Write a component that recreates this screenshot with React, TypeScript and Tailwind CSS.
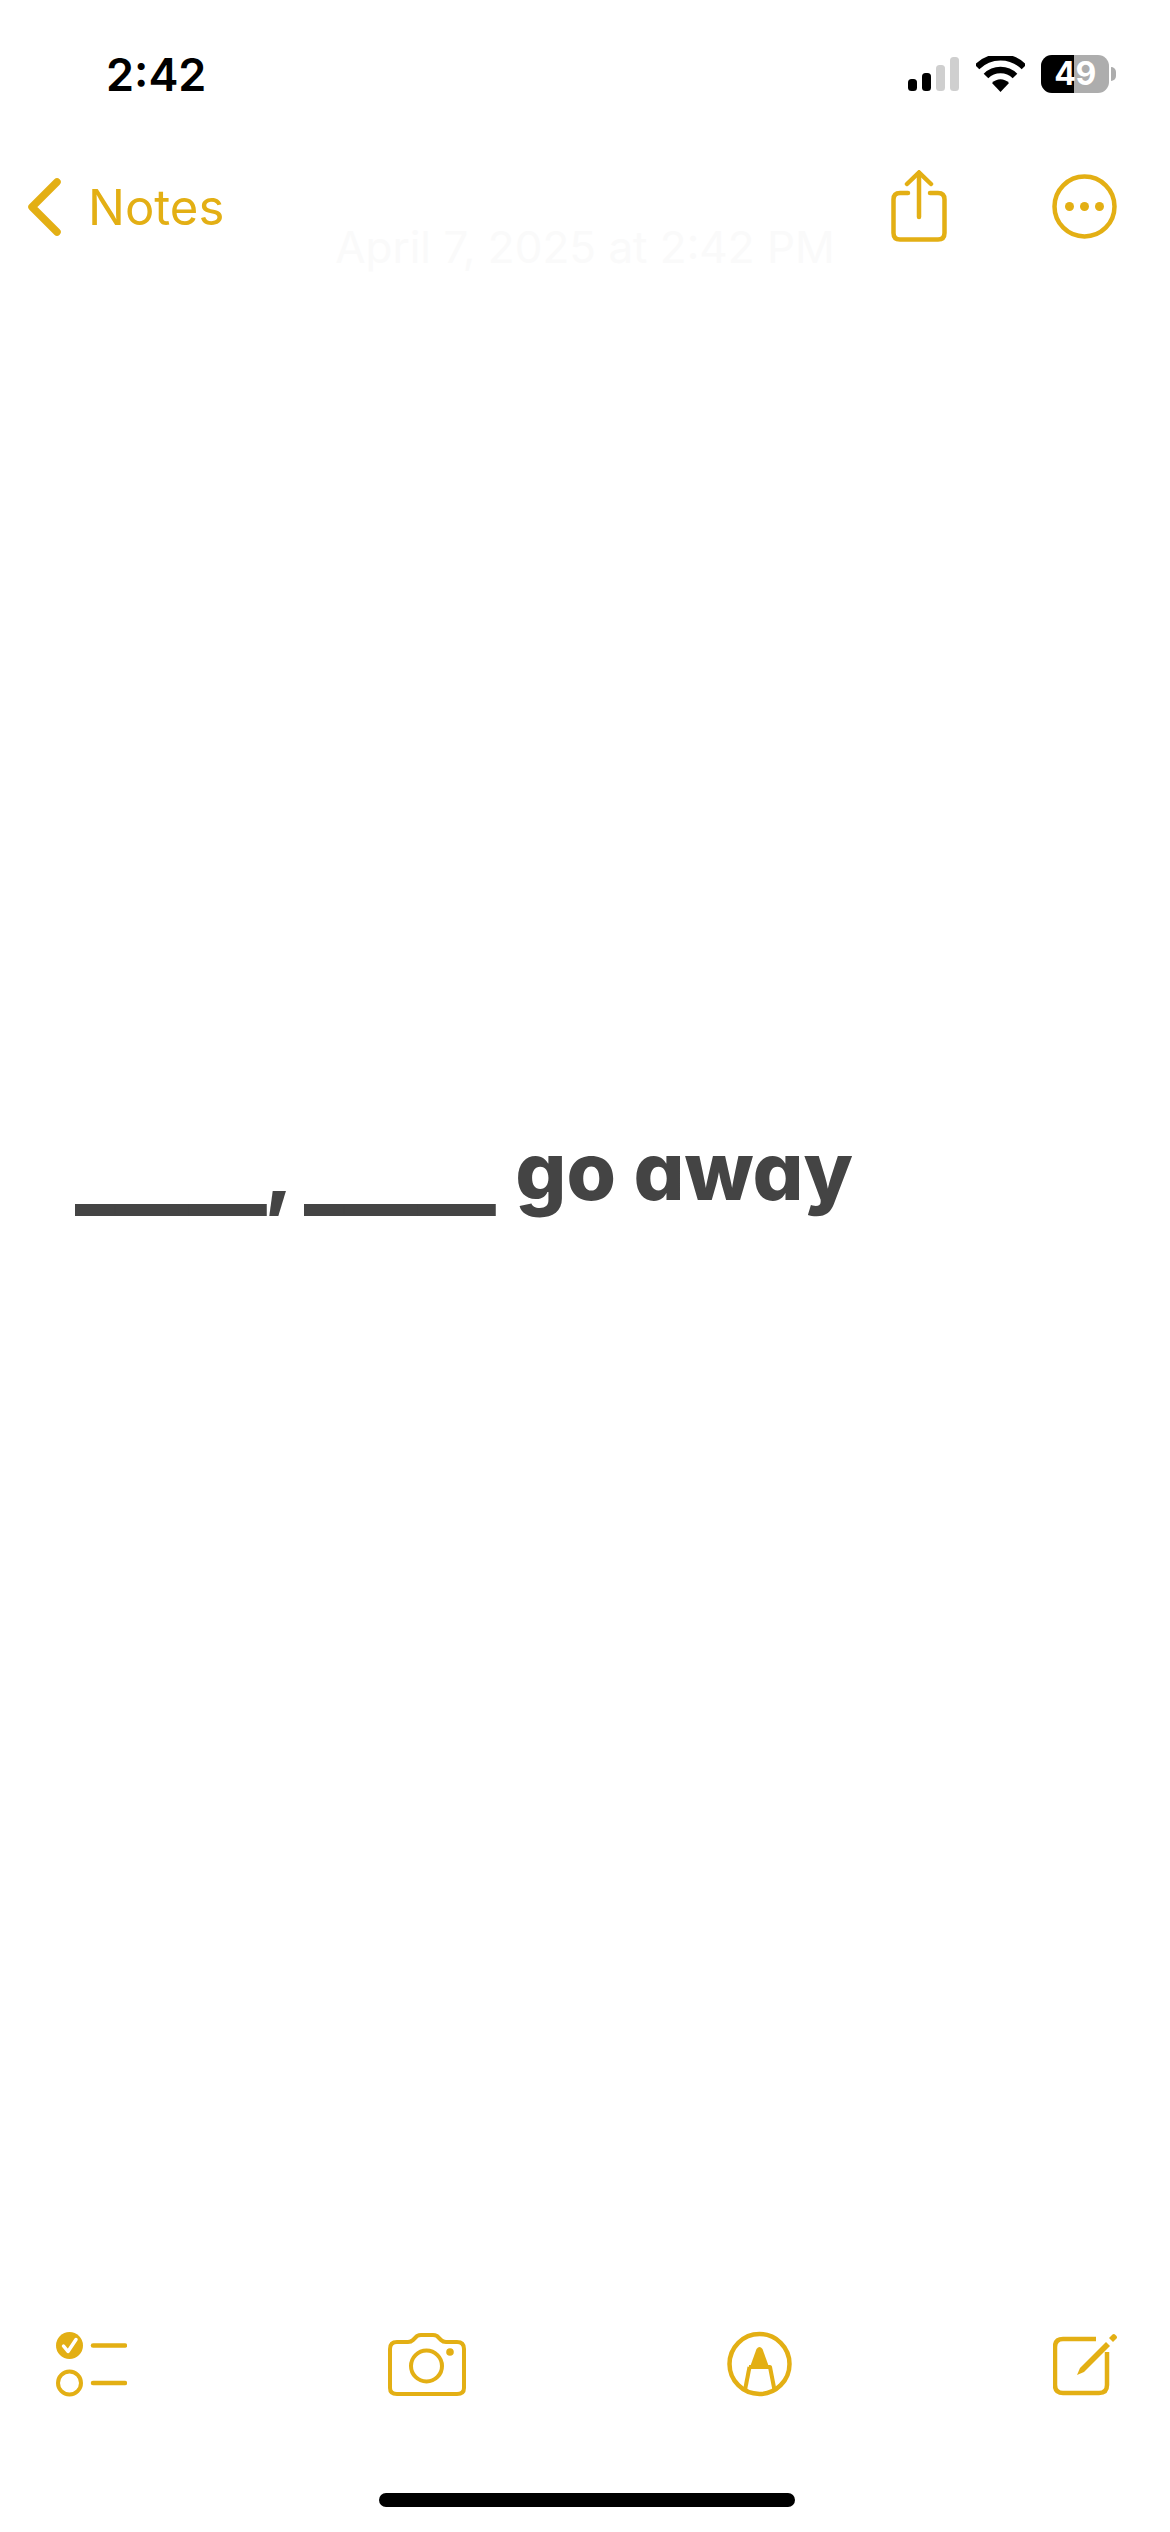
const gold = "#e3af14";

const Signal = () => (
  <svg width="51" height="34" viewBox="0 0 51 34">
    <rect x="0" y="22" width="9" height="12" rx="3.5" fill="#000" />
    <rect x="14" y="16" width="9" height="18" rx="3.5" fill="#000" />
    <rect x="28" y="8" width="9" height="26" rx="3.5" fill="#cfcfcf" />
    <rect x="42" y="0" width="9" height="34" rx="3.5" fill="#cfcfcf" />
  </svg>
);

const Wifi = () => (
  <svg width="49" height="36" viewBox="0 0 49 36">
    <path d="M1 11 C14 -2 35 -2 48 11" fill="none" stroke="#000" strokeWidth="6.5" />
    <path d="M10 20 C18 12 31 12 39 20" fill="none" stroke="#000" strokeWidth="6.5" />
    <path d="M16 27 C21 22 28 22 33 27 L24.5 36 Z" fill="#000" />
  </svg>
);

const Battery = () => (
  <div className="flex items-center gap-[2px]">
    <div className="relative w-[68px] h-[38px] rounded-[11px] overflow-hidden bg-[#adadad]">
      <div className="h-full w-[33px] bg-black" />
      <span className="absolute inset-0 flex items-center justify-center text-[32px] font-bold leading-none text-white tracking-[-0.5px]">
        49
      </span>
    </div>
    <div className="w-[5px] h-[14px] rounded-r-full bg-[#adadad]" />
  </div>
);

const Chevron = () => (
  <svg width="34" height="58" viewBox="0 0 34 58" fill="none">
    <path d="M30 4 L5 29 L30 54" stroke={gold} strokeWidth="7.5" strokeLinecap="round" strokeLinejoin="round" />
  </svg>
);

const ShareIcon = () => (
  <svg width="56" height="72" viewBox="0 0 56 72" fill="none" stroke={gold} strokeWidth="4.5" strokeLinecap="round">
    <path d="M17 23 H9 Q2.5 23 2.5 29.5 V63 Q2.5 69.5 9 69.5 H47 Q53.5 69.5 53.5 63 V29.5 Q53.5 23 47 23 H39" />
    <path d="M28 47 V3" />
    <path d="M16 14 L28 2.5 L40 14" />
  </svg>
);

const MoreIcon = () => (
  <svg width="65" height="65" viewBox="0 0 65 65" fill="none">
    <circle cx="32.5" cy="32.5" r="30" stroke={gold} strokeWidth="4.5" />
    <circle cx="17.5" cy="32.5" r="4.5" fill={gold} />
    <circle cx="32.5" cy="32.5" r="4.5" fill={gold} />
    <circle cx="47.5" cy="32.5" r="4.5" fill={gold} />
  </svg>
);

const ChecklistIcon = () => (
  <svg width="71" height="68" viewBox="0 0 71 68" fill="none">
    <circle cx="13.5" cy="15.5" r="13.5" fill={gold} />
    <path d="M7.5 16 L12 21.5 L20 9.5" stroke="#fff" strokeWidth="3.5" strokeLinecap="round" strokeLinejoin="round" />
    <circle cx="13.5" cy="53" r="11.5" stroke={gold} strokeWidth="4" />
    <path d="M37 15.5 H69" stroke={gold} strokeWidth="4.5" strokeLinecap="round" />
    <path d="M37 53 H69" stroke={gold} strokeWidth="4.5" strokeLinecap="round" />
  </svg>
);

const CameraIcon = () => (
  <svg width="78" height="68" viewBox="0 0 78 68" fill="none">
    <path
      d="M9 12 H20 Q23 12 25 10 L29 6 Q31 5 33 5 H45 Q47 5 49 6 L53 10 Q55 12 58 12 H69 Q76 12 76 19 V58 Q76 64 69 64 H9 Q2 64 2 58 V19 Q2 12 9 12 Z"
      stroke={gold}
      strokeWidth="4"
      strokeLinejoin="round"
    />
    <circle cx="38.5" cy="36" r="15.5" stroke={gold} strokeWidth="4" />
    <circle cx="62" cy="22" r="3.8" fill={gold} />
  </svg>
);

const MarkupIcon = () => (
  <svg width="65" height="68" viewBox="0 0 65 68" fill="none">
    <circle cx="32.5" cy="34" r="30" stroke={gold} strokeWidth="4.5" />
    <path d="M29.5 19 Q32.5 15 35.5 19 L42 37 H23 Z" fill={gold} />
    <path d="M22 37 H43 L47.5 60" stroke={gold} strokeWidth="4" strokeLinejoin="round" />
    <path d="M22.5 37 L18 60" stroke={gold} strokeWidth="4" />
  </svg>
);

const ComposeIcon = () => (
  <svg width="64" height="68" viewBox="0 0 64 68" fill="none">
    <path
      d="M43 9 H10 Q2 9 2 17 V55 Q2 63 10 63 H46 Q54 63 54 55 V22"
      stroke={gold}
      strokeWidth="4.5"
    />
    <path d="M24 45 L27 38 L53 12 L57 16 L31 42 Z" fill={gold} />
    <path d="M56 8 L59.5 4.5 Q61 3.5 62.5 5 L63.5 6 Q64.5 7.5 63.5 8.5 L60 12 Z" fill={gold} />
  </svg>
);

export default function App() {
  return (
    <div className="w-[1170px] h-[2532px] flex flex-col bg-white font-['Inter','Liberation_Sans',sans-serif]">
      {/* status bar */}
      <div className="flex items-center justify-between h-[93px] pt-[55px] pl-[106px] pr-[54px]">
        <span className="text-[45px] leading-none font-semibold text-black">2:42</span>
        <div className="flex items-center">
          <Signal />
          <div className="ml-[17px] mr-[16px]">
            <Wifi />
          </div>
          <Battery />
        </div>
      </div>

      {/* nav */}
      <div className="flex items-center justify-between h-[72px] mt-[76px] pl-[27px] pr-[53px]">
        <div className="flex items-center gap-[27px]">
          <div className="translate-y-[2px]">
            <Chevron />
          </div>
          <span className="text-[49px] leading-none text-[#e3af14] translate-y-[2px]">Notes</span>
        </div>
        <div className="flex items-center gap-[105px] translate-y-[1px]">
          <ShareIcon />
          <MoreIcon />
        </div>
      </div>

      <p className="-mt-[22px] text-center text-[44px] leading-[56px] text-[#fafafa]">April 7, 2025 at 2:42 PM</p>

      {/* note body */}
      <div className="flex-1 pt-[847px] pl-[76px]">
        <p className="text-[80px] leading-[97px] font-extrabold text-[#444444] whitespace-pre [font-feature-settings:'cv11']">
          <span className="inline-block translate-y-[5px] tracking-[-1px] [-webkit-text-stroke:2px_#444444]">_____</span>
          <span>, </span>
          <span className="inline-block -ml-[2px] translate-y-[5px] tracking-[-1px] [-webkit-text-stroke:2px_#444444]">_____</span>
          <span className="ml-[4px]"> go away</span>
        </p>
      </div>

      {/* toolbar */}
      <div className="flex items-center justify-between pl-[56px] pr-[53px] h-[68px] mb-[95px]">
        <ChecklistIcon />
        <CameraIcon />
        <MarkupIcon />
        <ComposeIcon />
      </div>

      {/* home indicator */}
      <div className="flex justify-center pl-[3px]">
        <div className="w-[416px] h-[14px] rounded-full bg-black mb-[25px]" />
      </div>
    </div>
  );
}
